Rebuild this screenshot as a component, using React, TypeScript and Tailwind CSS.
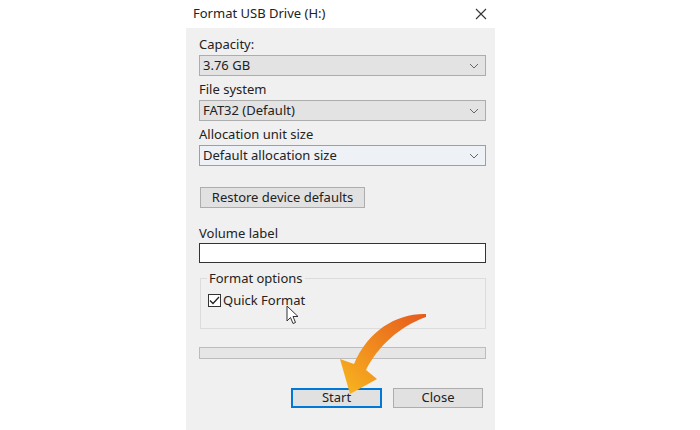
import React from 'react';

const font = { fontFamily: '"Segoe UI", "Noto Sans", "Open Sans", sans-serif' };

function Chevron() {
  return (
    <svg width="10" height="6" viewBox="0 0 10 6" className="text-[#666]">
      <path d="M1 1 L5 5 L9 1" fill="none" stroke="currentColor" strokeWidth="1" />
    </svg>
  );
}

function Select({ value, focused }: { value: string; focused?: boolean }) {
  return (
    <div
      className={`flex h-[21px] items-center justify-between border pl-[3px] pr-[6px] text-[13px] text-[#222] ${
        focused ? 'border-[#7aa7d6] bg-[#eef1f5]' : 'border-[#adadad] bg-[#e3e3e3]'
      }`}
    >
      <span>{value}</span>
      <Chevron />
    </div>
  );
}

export default function App() {
  return (
    <div className="relative h-[430px] w-[700px] overflow-hidden bg-white" style={font}>
      <div className="ml-[186px] flex h-full w-[309px] flex-col">
        {/* Title bar */}
        <div className="flex h-[28px] items-center justify-between pl-[7px] pr-[8px] text-[13px] text-[#222]">
          <span>Format USB Drive (H:)</span>
          <svg width="12" height="12" viewBox="0 0 12 12">
            <path d="M1 1 L11 11 M11 1 L1 11" stroke="#333" strokeWidth="1.1" />
          </svg>
        </div>

        {/* Body */}
        <div className="flex flex-1 flex-col bg-[#f0f0f0] pl-[13px] pr-[9px] text-[13px] text-[#222]">
          <div className="mt-[7px] h-[18px] leading-[18px]">Capacity:</div>
          <div className="mt-[2px]">
            <Select value="3.76 GB" />
          </div>
          <div className="mt-[4px] h-[18px] leading-[18px]">File system</div>
          <div className="mt-[2px]">
            <Select value="FAT32 (Default)" />
          </div>
          <div className="mt-[4px] h-[18px] leading-[18px]">Allocation unit size</div>
          <div className="mt-[2px]">
            <Select value="Default allocation size" focused />
          </div>

          <div className="mt-[21px] flex">
            <div className="ml-[1px] flex h-[21px] w-[165px] items-center justify-center border border-[#adadad] bg-[#e1e1e1]">
              Restore device defaults
            </div>
          </div>

          <div className="mt-[16px] h-[18px] leading-[18px]">Volume label</div>
          <div className="mt-[1px] h-[20px] border border-[#333] bg-white" />

          {/* Format options group */}
          <div className="relative mt-[15px] ml-[1px] h-[51px] border border-[#dcdcdc]">
            <span className="absolute -top-[10px] left-[6px] bg-[#f0f0f0] px-[2px] leading-[18px]">Format options</span>
            <div className="mt-[12px] ml-[7px] flex items-center gap-[2px]">
              <div className="flex h-[13px] w-[13px] items-center justify-center border border-[#333] bg-white">
                <svg width="11" height="9" viewBox="0 0 11 9">
                  <path d="M1 4.5 L4 7.5 L10 1" fill="none" stroke="#222" strokeWidth="1.3" />
                </svg>
              </div>
              <span>Quick Format</span>
            </div>
          </div>

          {/* Progress */}
          <div className="mt-[18px] h-[12px] border border-[#bcbcbc] bg-[#e6e6e6]" />

          {/* Buttons */}
          <div className="mt-[29px] flex justify-end gap-[11px] pr-[3px]">
            <div className="flex h-[20px] w-[91px] items-center justify-center border-2 border-[#0078d7] bg-[#e1e1e1]">
              Start
            </div>
            <div className="flex h-[20px] w-[90px] items-center justify-center border border-[#adadad] bg-[#e1e1e1]">
              Close
            </div>
          </div>
        </div>
      </div>

      {/* Mouse cursor */}
      <svg className="pointer-events-none absolute left-[286px] top-[305px]" width="14" height="20" viewBox="0 0 14 20">
        <path d="M1 1 L1 16 L4.5 12.5 L7 18.5 L9.5 17.5 L7 11.5 L12 11.5 Z" fill="white" stroke="#333" strokeWidth="1" />
      </svg>

      {/* Orange arrow overlay */}
      <svg className="pointer-events-none absolute inset-0" width="700" height="430" viewBox="0 0 700 430">
        <defs>
          <linearGradient id="arr" x1="425" y1="314" x2="350" y2="394" gradientUnits="userSpaceOnUse">
            <stop offset="0" stopColor="#e65a1c" />
            <stop offset="0.55" stopColor="#f08a1e" />
            <stop offset="1" stopColor="#f7b21f" />
          </linearGradient>
        </defs>
        <path
          d="M426 314 C398 313 368 330 354 364 L340 359 L350 394 L377 379 L366 370 C378 346 400 326 426 317 Z"
          fill="url(#arr)"
        />
      </svg>
    </div>
  );
}
